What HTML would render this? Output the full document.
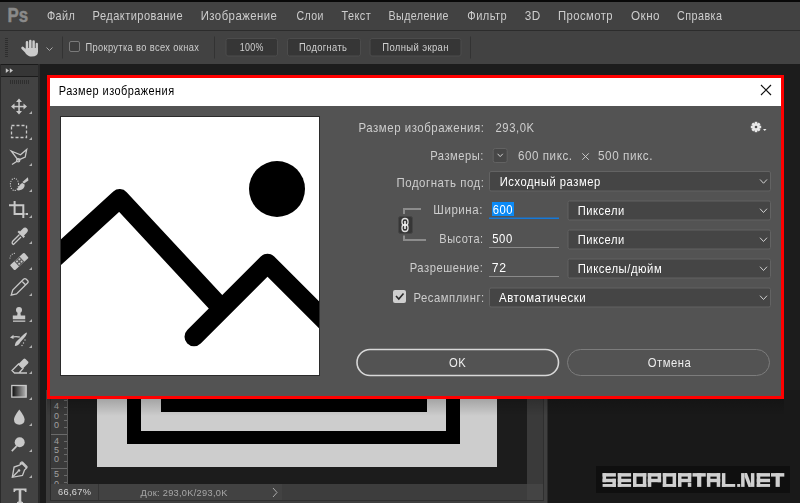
<!DOCTYPE html>
<html><head><meta charset="utf-8">
<style>
*{margin:0;padding:0;box-sizing:border-box}
html,body{width:800px;height:503px;overflow:hidden;background:#1b1b1b;font-family:"Liberation Sans",sans-serif;position:relative}
svg{position:absolute;left:0;top:0}
</style></head><body>
<svg width="800" height="503">
<!-- bars -->
<rect x="0" y="0" width="800" height="2" fill="#080808"/>
<rect x="0" y="2" width="800" height="28" fill="#424242"/>
<rect x="0" y="30" width="800" height="1" fill="#2c2c2c"/>
<rect x="0" y="31" width="800" height="33" fill="#424242"/>
<text x="7.6" y="21.7" font-family="Liberation Sans" font-weight="700" font-size="19.6" fill="#8a8a8a" stroke="#8a8a8a" stroke-width="0.5" textLength="20.6" lengthAdjust="spacingAndGlyphs">Ps</text>
<g fill="#2e2e2e"><rect x="5" y="38" width="3" height="1"/><rect x="5" y="40" width="3" height="1"/><rect x="5" y="42" width="3" height="1"/><rect x="5" y="44" width="3" height="1"/><rect x="5" y="46" width="3" height="1"/><rect x="5" y="48" width="3" height="1"/><rect x="5" y="50" width="3" height="1"/><rect x="5" y="52" width="3" height="1"/><rect x="5" y="54" width="3" height="1"/><rect x="5" y="56" width="3" height="1"/></g>
<g stroke="#cbcbcb" stroke-linecap="round" fill="none"><path d="M27 42.3 V50 M30.3 41 V50 M33.6 41.5 V50" stroke-width="2.5"/><path d="M36.8 44 V50" stroke-width="2.3"/><path d="M22.6 48 L26.8 52.3" stroke-width="2.7"/></g>
<path d="M25.6 48 H38 V51.5 Q38 56.6 31.8 56.6 Q28 56.6 25.6 53.5 Z" fill="#cbcbcb"/>
<path d="M46.5 47.5 L49.5 50.5 L52.5 47.5" stroke="#a8a8a8" stroke-width="1" fill="none"/>
<rect x="62" y="36.5" width="1" height="22" fill="#333"/>
<rect x="69.5" y="41.5" width="10" height="10" rx="1.5" fill="#3d3d3d" stroke="#7a7a7a" stroke-width="1"/>
<rect x="214" y="36.5" width="1" height="22" fill="#333"/>
<rect x="470" y="36.5" width="1" height="22" fill="#333"/>
<rect x="226" y="38.5" width="51.5" height="17.5" rx="2" fill="#363636" stroke="#4c4c4c" stroke-width="1"/>
<rect x="287.5" y="38.5" width="73" height="17.5" rx="2" fill="#363636" stroke="#4c4c4c" stroke-width="1"/>
<rect x="370" y="38.5" width="91" height="17.5" rx="2" fill="#363636" stroke="#4c4c4c" stroke-width="1"/>

<!-- tool panel -->
<rect x="0" y="64" width="800" height="1" fill="#1b1b1b"/>
<rect x="0" y="65" width="38" height="11" fill="#363636"/>
<rect x="0" y="77" width="38" height="426" fill="#424242"/>
<rect x="38" y="64" width="2" height="439" fill="#2a2a2a"/>
<path d="M5.8 68.2 L9 70.6 L5.8 73 Z M9.8 68.2 L13 70.6 L9.8 73 Z" fill="#c8c8c8"/><rect x="0" y="64" width="1" height="439" fill="#2a2a2a"/>
<g fill="#2e2e2e"><rect x="10" y="80" width="1" height="4"/><rect x="12" y="80" width="1" height="4"/><rect x="14" y="80" width="1" height="4"/><rect x="16" y="80" width="1" height="4"/><rect x="18" y="80" width="1" height="4"/><rect x="20" y="80" width="1" height="4"/><rect x="22" y="80" width="1" height="4"/><rect x="24" y="80" width="1" height="4"/><rect x="26" y="80" width="1" height="4"/><rect x="28" y="80" width="1" height="4"/></g>

<g fill="#c8c8c8" stroke="none">
 <!-- move -->
 <rect x="18.3" y="101" width="1.5" height="11"/><rect x="13" y="105.8" width="11" height="1.5"/>
 <path d="M19 98.5 L22 102 L16 102 Z M19 114.5 L22 111 L16 111 Z M11 106.5 L14.5 103.5 L14.5 109.5 Z M27 106.5 L23.5 103.5 L23.5 109.5 Z"/>
</g>
<g fill="none" stroke="#c8c8c8" stroke-width="1.3">
 <rect x="11.5" y="125.5" width="15" height="12" stroke-dasharray="3 2"/>
 <path d="M11.2 151 L20.5 154.8 L26.7 149.4 L25.2 157.1 L18.2 160.2 Z"/>
 <circle cx="18.2" cy="160.2" r="1.6"/>
 <path d="M17 161.2 L12 164.5"/>
</g>
<g fill="#c8c8c8">
 <path d="M27.9 177.2 L28.4 180.6 L24.1 183.6 L22.4 182 Z"/>
 <path d="M24.6 184.6 Q25 187.6 22 189.6 Q19.5 190.9 16.7 190.1 Q18 187.5 19.5 185.5 Q21 183.4 22.4 183 Z"/>
</g>
<g fill="none" stroke="#c8c8c8">
 <ellipse cx="14.5" cy="184.4" rx="4.1" ry="6.1" stroke-width="1.3" stroke-dasharray="0 2.35" stroke-linecap="round"/>
</g>
<g fill="none" stroke="#c8c8c8" stroke-width="2">
 <path d="M14.6 201 V214 H24.5"/>
 <path d="M9 205.3 H23.3 V218"/>
 <path d="M25.5 214 H28"/>
</g>
<g fill="#c8c8c8">
 <path d="M20 231.5 L22.5 229 Q25 226.5 27 228.5 Q29 230.5 26.5 233 L24 235.5 L25 236.5 L23.5 238 L17.5 232 L19 230.5 Z"/>
</g>
<path d="M19.5 234.5 L12.5 241.5 Q11.5 243.5 13.5 244.5 L21 237" fill="none" stroke="#c8c8c8" stroke-width="1.3"/>
<g transform="translate(19.3,261.5) rotate(-42)" fill="#c8c8c8">
 <rect x="-9.5" y="-3.6" width="19" height="7.2" rx="1.2"/>
 <rect x="-3.6" y="-3.6" width="7.2" height="7.2" fill="#5a5a5a"/>
 <circle cx="-1.6" cy="-1.6" r="1" /><circle cx="1.6" cy="-1.6" r="1"/><circle cx="-1.6" cy="1.6" r="1"/><circle cx="1.6" cy="1.6" r="1"/>
</g>
<path d="M10 258.5 A5 5 0 0 1 16 253.5" fill="none" stroke="#c8c8c8" stroke-width="1.1" stroke-dasharray="1 1.2"/>
<g fill="none" stroke="#c8c8c8" stroke-width="1.3">
 <path d="M11.2 295.2 L12.7 290 L23.5 279.2 Q25 278 26.3 279.3 L27.5 280.5 Q28.8 281.8 27.5 283 L16.5 294 Z M21.7 281 L25.7 285"/>
</g>
<g fill="#c8c8c8">
 <circle cx="19" cy="310" r="3"/>
 <path d="M17.8 311 H20.2 L20.8 315.5 H25.2 V319.3 H12.8 V315.5 H17.2 Z"/>
 <rect x="13" y="320.5" width="12.3" height="1.3"/>
 <!-- history brush -->
 <path d="M26.8 332.5 Q27.3 334 24.5 337.5 L20.5 342 Q18.5 346 14.8 346 Q15 342 18 340 L22 336 Q25.5 332.8 26.8 332.5 Z"/>
 <path d="M10 337.5 L13.5 334.7 L13.5 336.2 Q17 335.6 20 336.5 L19.5 337.7 Q16.5 337 13.5 337.5 L13.5 339 Z"/>
 <circle cx="25" cy="340" r="0.7"/><circle cx="23.5" cy="343" r="0.7"/><circle cx="22" cy="345.5" r="0.7"/>
 <!-- eraser -->
 <path d="M18.5 364 L23.5 359 Q24.5 358 25.5 359 L28 361.5 Q29 362.5 28 363.5 L23 368.5 Z"/>
</g>
<path d="M18.5 364 L12 370.5 L14.5 373 L19 373 L23 368.5 Z M14.5 373 H27" fill="none" stroke="#c8c8c8" stroke-width="1.3"/>
<defs><linearGradient id="gr" x1="0" y1="0" x2="1" y2="0"><stop offset="0" stop-color="#0a0a0a"/><stop offset="1" stop-color="#b8b8b8"/></linearGradient></defs>
<rect x="11.8" y="385.5" width="14.4" height="11.6" fill="url(#gr)" stroke="#c8c8c8" stroke-width="1.3"/>
<g fill="#c8c8c8">
 <path d="M19.3 409.5 Q24.6 416.5 24.6 419.6 Q24.6 424.7 19.3 424.7 Q14 424.7 14 419.6 Q14 416.5 19.3 409.5 Z"/>
 <circle cx="19.7" cy="442.3" r="5"/>
 <path d="M11.2 450.5 L16 445.5 L17.2 446.7 L12.4 451.7 Z"/>
 <path d="M13.5 488.5 H26.5 V492 H25.2 Q25 490.2 23.2 490.2 H21.3 V501 Q21.3 502 23 502 V503 H17 V502 Q18.7 502 18.7 501 V490.2 H16.8 Q15 490.2 14.8 492 H13.5 Z"/>
</g>
<g fill="none" stroke="#c8c8c8" stroke-width="1.3">
 <path d="M22 463.5 L26.5 468 L24.5 470 L22.5 475.5 L12.3 477.3 L14.1 467.1 L19.5 465.1 Z M19.8 463.7 L21.3 462.2 Q22 461.6 22.6 462.2 L26.8 466.4 Q27.4 467 26.8 467.7 L25.3 469.2"/>
 <path d="M12.5 477 L18.2 471.3"/>
</g>
<circle cx="19" cy="470.5" r="1.3" fill="#c8c8c8"/>

<path d="M29 114 L32 114 L32 111 Z" fill="#b0b0b0"/><path d="M29 140 L32 140 L32 137 Z" fill="#b0b0b0"/><path d="M29 166 L32 166 L32 163 Z" fill="#b0b0b0"/><path d="M29 192 L32 192 L32 189 Z" fill="#b0b0b0"/><path d="M29 218 L32 218 L32 215 Z" fill="#b0b0b0"/><path d="M29 244 L32 244 L32 241 Z" fill="#b0b0b0"/><path d="M29 270 L32 270 L32 267 Z" fill="#b0b0b0"/><path d="M29 296 L32 296 L32 293 Z" fill="#b0b0b0"/><path d="M29 322 L32 322 L32 319 Z" fill="#b0b0b0"/><path d="M29 348 L32 348 L32 345 Z" fill="#b0b0b0"/><path d="M29 374 L32 374 L32 371 Z" fill="#b0b0b0"/><path d="M29 400 L32 400 L32 397 Z" fill="#b0b0b0"/><path d="M29 426 L32 426 L32 423 Z" fill="#b0b0b0"/><path d="M29 452 L32 452 L32 449 Z" fill="#b0b0b0"/><path d="M29 478 L32 478 L32 475 Z" fill="#b0b0b0"/>

<!-- document window -->
<rect x="40" y="64" width="760" height="439" fill="#1c1c1c"/>
<rect x="547" y="390" width="253" height="113" fill="#191919"/>
<rect x="97" y="390" width="400" height="77" fill="#cdcdcd"/>
<rect x="127" y="390" width="333" height="54" fill="#000"/>
<rect x="141" y="390" width="305" height="41" fill="#cdcdcd"/>
<rect x="161" y="390" width="266" height="22" fill="#000"/>
<rect x="46" y="390" width="4" height="113" fill="#3c3c3c"/>
<rect x="50" y="390" width="1" height="113" fill="#2c2c2c"/>
<rect x="51" y="390" width="17" height="94" fill="#3a3a3a"/>
<g fill="#a0a0a0" font-family="Liberation Sans" font-size="9" text-anchor="middle"><text x="56.6" y="409.3">4</text><text x="56.6" y="418.6">0</text><text x="56.6" y="427.8">0</text><text x="56.6" y="443.8">4</text><text x="56.6" y="453.0">5</text><text x="56.6" y="462.3">0</text><text x="56.6" y="477.3">5</text><text x="56.6" y="486.6">0</text></g>
<rect x="51" y="434" width="17" height="1" fill="#6a6a6a"/>
<rect x="51" y="468" width="17" height="1" fill="#6a6a6a"/>
<g fill="#6a6a6a"><rect x="64" y="400" width="4" height="1"/><rect x="64" y="407" width="4" height="1"/><rect x="64" y="414" width="4" height="1"/><rect x="64" y="420" width="4" height="1"/><rect x="64" y="427" width="4" height="1"/><rect x="64" y="441" width="4" height="1"/><rect x="64" y="448" width="4" height="1"/><rect x="64" y="454" width="4" height="1"/><rect x="64" y="461" width="4" height="1"/><rect x="64" y="475" width="4" height="1"/><rect x="64" y="482" width="4" height="1"/></g>
<rect x="67" y="390" width="1" height="94" fill="#5a5a5a"/>
<rect x="527" y="390" width="16" height="94" fill="#3a3a3a"/>
<rect x="543" y="390" width="1" height="113" fill="#2f2f2f"/>
<rect x="544" y="390" width="3.5" height="113" fill="#404040"/>
<rect x="51" y="484" width="231" height="16" fill="#424242"/>
<rect x="282" y="484" width="245" height="16" fill="#3d3d3d"/>
<rect x="527" y="484" width="16" height="16" fill="#444444"/>
<rect x="50" y="500" width="494" height="1" fill="#2f2f2f"/>
<rect x="46" y="501" width="498" height="2" fill="#3e3e3e"/>
<rect x="98" y="484" width="1" height="16" fill="#353535"/>
<path d="M273 488 L277 492.5 L273 497" stroke="#aaa" stroke-width="1" fill="none"/>

<!-- watermark -->
<rect x="596" y="466" width="194" height="27" fill="#0f0f0f"/>
<g fill="#cfcfcf"><rect x="602.60" y="473.10" width="13.30" height="3.50"/><rect x="602.60" y="473.10" width="3.50" height="9.10"/><rect x="602.60" y="478.75" width="13.30" height="3.45"/><rect x="612.40" y="478.75" width="3.50" height="8.15"/><rect x="602.60" y="484.00" width="13.30" height="2.90"/><rect x="617.80" y="473.10" width="3.50" height="13.80"/><rect x="617.80" y="473.10" width="13.30" height="3.50"/><rect x="617.80" y="478.75" width="13.30" height="3.45"/><rect x="617.80" y="484.00" width="13.30" height="2.90"/><rect x="633.00" y="473.10" width="3.50" height="13.80"/><rect x="642.80" y="473.10" width="3.50" height="13.80"/><rect x="633.00" y="473.10" width="13.30" height="3.50"/><rect x="633.00" y="484.00" width="13.30" height="2.90"/><rect x="647.80" y="473.10" width="3.50" height="13.80"/><rect x="647.80" y="473.10" width="13.30" height="3.50"/><rect x="647.80" y="478.75" width="13.30" height="3.45"/><rect x="657.60" y="473.10" width="3.50" height="9.10"/><rect x="662.80" y="473.10" width="3.50" height="13.80"/><rect x="672.60" y="473.10" width="3.50" height="13.80"/><rect x="662.80" y="473.10" width="13.30" height="3.50"/><rect x="662.80" y="484.00" width="13.30" height="2.90"/><rect x="678.00" y="473.10" width="3.50" height="13.80"/><rect x="678.00" y="473.10" width="13.30" height="3.50"/><rect x="678.00" y="478.75" width="12.30" height="3.45"/><rect x="687.80" y="473.10" width="3.50" height="9.10"/><rect x="687.80" y="482.70" width="3.50" height="4.20"/><rect x="692.50" y="473.10" width="13.30" height="3.50"/><rect x="697.10" y="473.10" width="4.20" height="13.80"/><rect x="706.90" y="473.10" width="3.50" height="13.80"/><rect x="716.70" y="473.10" width="3.50" height="13.80"/><rect x="706.90" y="473.10" width="13.30" height="3.50"/><rect x="706.90" y="478.75" width="13.30" height="3.45"/><rect x="721.90" y="473.10" width="3.50" height="13.80"/><rect x="721.90" y="484.00" width="13.30" height="2.90"/><rect x="737.20" y="484.00" width="3.00" height="2.90"/><rect x="741.10" y="473.10" width="3.50" height="13.80"/><rect x="750.90" y="473.10" width="3.50" height="13.80"/><path d="M744.6 473.1 L747.0 473.1 L750.9 483.40000000000003 L750.9 486.90000000000003 L748.5 486.90000000000003 L744.6 476.6 Z"/><rect x="756.75" y="473.10" width="3.50" height="13.80"/><rect x="756.75" y="473.10" width="13.30" height="3.50"/><rect x="756.75" y="478.75" width="13.30" height="3.45"/><rect x="756.75" y="484.00" width="13.30" height="2.90"/><rect x="771.00" y="473.10" width="13.30" height="3.50"/><rect x="775.60" y="473.10" width="4.20" height="13.80"/></g>

<!-- dialog -->
<defs><linearGradient id="sh" x1="0" y1="0" x2="0" y2="1"><stop offset="0" stop-color="#000" stop-opacity="0.2"/><stop offset="1" stop-color="#000" stop-opacity="0"/></linearGradient></defs>
<rect x="47" y="399" width="737" height="17" fill="url(#sh)"/>
<rect x="48.5" y="76.5" width="734" height="321" fill="#535353" stroke="#ff0000" stroke-width="3"/>
<rect x="50" y="78" width="731" height="28" fill="#ffffff"/>
<path d="M761 85 L771 95 M771 85 L761 95" stroke="#111" stroke-width="1.2"/>
<rect x="60" y="116" width="260" height="260" fill="#2b2b2b"/>
<svg x="61" y="117" width="258" height="258" viewBox="61 117 258 258">
 <rect x="61" y="117" width="258" height="258" fill="#fff"/>
 <circle cx="277" cy="189" r="28" fill="#000"/>
 <polyline points="40,271.4 119.7,198.6 222,308.7" fill="none" stroke="#000" stroke-width="19" stroke-linejoin="round"/>
 <polyline points="194,336.7 267.5,263.2 340,335.7" fill="none" stroke="#000" stroke-width="19" stroke-linejoin="round" stroke-linecap="round"/>
</svg>
<!-- gear -->
<g transform="translate(756,127)" fill="#e8e8e8">
 <rect x="-1.3" y="-5.2" width="2.6" height="10.4" transform="rotate(0)"/><rect x="-1.3" y="-5.2" width="2.6" height="10.4" transform="rotate(45)"/><rect x="-1.3" y="-5.2" width="2.6" height="10.4" transform="rotate(90)"/><rect x="-1.3" y="-5.2" width="2.6" height="10.4" transform="rotate(135)"/>
 <circle r="3.8"/>
 <circle r="1.3" fill="#535353"/>
</g>
<path d="M763 129 L766.5 129 L764.75 131 Z" fill="#e8e8e8"/>
<!-- small dims button -->
<rect x="493.2" y="148.5" width="14" height="14" rx="2" fill="#474747" stroke="#626262"/>
<path d="M497.6 153.8 L500.20000000000005 156.60000000000002 L502.8 153.8" stroke="#cfcfcf" stroke-width="1" fill="none"/>
<rect x="489.5" y="171.5" width="281" height="19.5" rx="1.5" fill="#454545" stroke="#636363" stroke-width="1"/><path d="M760 179.45 L763.5 183.25 L767 179.45" stroke="#d0d0d0" stroke-width="1" fill="none"/>
<rect x="568.0" y="201.0" width="202.5" height="19.0" rx="1.5" fill="#454545" stroke="#636363" stroke-width="1"/><path d="M760 208.7 L763.5 212.5 L767 208.7" stroke="#d0d0d0" stroke-width="1" fill="none"/>
<rect x="568.0" y="230.0" width="202.5" height="19.0" rx="1.5" fill="#454545" stroke="#636363" stroke-width="1"/><path d="M760 237.7 L763.5 241.5 L767 237.7" stroke="#d0d0d0" stroke-width="1" fill="none"/>
<rect x="568.0" y="259.0" width="202.5" height="19.0" rx="1.5" fill="#454545" stroke="#636363" stroke-width="1"/><path d="M760 266.7 L763.5 270.5 L767 266.7" stroke="#d0d0d0" stroke-width="1" fill="none"/>
<rect x="489.5" y="288.0" width="281" height="19.0" rx="1.5" fill="#454545" stroke="#636363" stroke-width="1"/><path d="M760 295.7 L763.5 299.5 L767 295.7" stroke="#d0d0d0" stroke-width="1" fill="none"/>
<!-- inputs -->
<rect x="492" y="202" width="22" height="14" fill="#0b8af6"/>
<rect x="489" y="217.5" width="70" height="1.5" fill="#1679d8"/>
<rect x="489" y="247" width="70" height="1" fill="#8a8a8a"/>
<rect x="489" y="276" width="70" height="1" fill="#8a8a8a"/>
<!-- link bracket -->
<path d="M404 214 V209 H421" stroke="#8c8c8c" stroke-width="2" fill="none"/>
<path d="M404 235.5 V240 H426" stroke="#8c8c8c" stroke-width="2" fill="none"/>
<rect x="398.5" y="216.5" width="14" height="17" rx="2" fill="#363636" stroke="#454545"/>
<rect x="402" y="218.5" width="6" height="7" rx="3" fill="none" stroke="#e0e0e0" stroke-width="1.3"/>
<rect x="402" y="224.5" width="6" height="7" rx="3" fill="none" stroke="#e0e0e0" stroke-width="1.3"/>
<rect x="404.2" y="221" width="1.6" height="8" fill="#f0f0f0"/>
<!-- checkbox -->
<rect x="393" y="290" width="13" height="13" rx="2" fill="#cfcfcf"/>
<path d="M396 296 L398.8 299 L403.5 293.5" stroke="#2a2a2a" stroke-width="1.6" fill="none"/>
<!-- buttons -->
<rect x="357" y="349.5" width="201.5" height="26" rx="13" fill="none" stroke="#d8d8d8" stroke-width="1.6"/>
<rect x="567.5" y="349.5" width="202" height="26" rx="13" fill="none" stroke="#7c7c7c" stroke-width="1"/>
</svg>
<svg style="position:absolute;left:0;top:0;will-change:transform" width="800" height="503" font-family="Liberation Sans">
<text transform="translate(46.90,19.60) scale(0.8819,1)" font-size="12.3" fill="#cdcdcd" letter-spacing="0.5">Файл</text>
<text transform="translate(92.60,19.60) scale(0.8992,1)" font-size="12.3" fill="#cdcdcd" letter-spacing="0.5">Редактирование</text>
<text transform="translate(200.70,19.60) scale(0.9248,1)" font-size="12.3" fill="#cdcdcd" letter-spacing="0.5">Изображение</text>
<text transform="translate(296.50,19.60) scale(0.8599,1)" font-size="12.3" fill="#cdcdcd" letter-spacing="0.5">Слои</text>
<text transform="translate(341.50,19.60) scale(0.8892,1)" font-size="12.3" fill="#cdcdcd" letter-spacing="0.5">Текст</text>
<text transform="translate(388.50,19.60) scale(0.8685,1)" font-size="12.3" fill="#cdcdcd" letter-spacing="0.5">Выделение</text>
<text transform="translate(467.30,19.60) scale(0.8995,1)" font-size="12.3" fill="#cdcdcd" letter-spacing="0.5">Фильтр</text>
<text transform="translate(524.70,19.60) scale(0.9568,1)" font-size="12.3" fill="#cdcdcd" letter-spacing="0.5">3D</text>
<text transform="translate(557.90,19.60) scale(0.9170,1)" font-size="12.3" fill="#cdcdcd" letter-spacing="0.5">Просмотр</text>
<text transform="translate(631.00,19.60) scale(0.9502,1)" font-size="12.3" fill="#cdcdcd" letter-spacing="0.5">Окно</text>
<text transform="translate(677.00,19.60) scale(0.8780,1)" font-size="12.3" fill="#cdcdcd" letter-spacing="0.5">Справка</text>
<text transform="translate(85.40,51.40) scale(0.9202,1)" font-size="10.1" fill="#cccccc" letter-spacing="0.4">Прокрутка во всех окнах</text>
<text transform="translate(239.70,51.30) scale(0.8799,1)" font-size="10.1" fill="#d0d0d0" letter-spacing="0.4">100%</text>
<text transform="translate(299.00,51.30) scale(0.9249,1)" font-size="10.1" fill="#d0d0d0" letter-spacing="0.4">Подогнать</text>
<text transform="translate(382.20,51.30) scale(0.9391,1)" font-size="10.1" fill="#d0d0d0" letter-spacing="0.4">Полный экран</text>
<text transform="translate(58.10,495.20) scale(0.9535,1)" font-size="9.7" fill="#d8d8d8" letter-spacing="0.3">66,67%</text>
<text transform="translate(140.60,496.00) scale(0.9549,1)" font-size="9.7" fill="#a8a8a8" letter-spacing="0.3">Док: 293,0K/293,0K</text>
</svg>
<svg style="position:absolute;left:0;top:0" width="800" height="503" font-family="Liberation Sans">
<text transform="translate(58.80,95.00) scale(0.8647,1)" font-size="12.7" fill="#000000" letter-spacing="0.5">Размер изображения</text>
<text transform="translate(358.50,131.50) scale(0.9009,1)" font-size="12.7" fill="#cdcdcd" letter-spacing="0.6">Размер изображения:</text>
<text transform="translate(495.50,131.80) scale(0.8902,1)" font-size="12.7" fill="#cdcdcd" letter-spacing="0.6">293,0K</text>
<text transform="translate(430.25,160.00) scale(0.8802,1)" font-size="12.7" fill="#cdcdcd" letter-spacing="0.6">Размеры:</text>
<text transform="translate(518.00,160.00) scale(0.9145,1)" font-size="12.7" fill="#cdcdcd" letter-spacing="0.6">600 пикс.</text>
<path d="M582.3 153.3 L588.8 159.8 M588.8 153.3 L582.3 159.8" stroke="#c8c8c8" stroke-width="1" fill="none"/>
<text transform="translate(598.00,160.00) scale(0.9229,1)" font-size="12.7" fill="#cdcdcd" letter-spacing="0.6">500 пикс.</text>
<text transform="translate(396.50,186.90) scale(0.9002,1)" font-size="12.7" fill="#cdcdcd" letter-spacing="0.6">Подогнать под:</text>
<text transform="translate(433.30,214.20) scale(0.9094,1)" font-size="12.7" fill="#cdcdcd" letter-spacing="0.6">Ширина:</text>
<text transform="translate(439.30,243.00) scale(0.8660,1)" font-size="12.7" fill="#cdcdcd" letter-spacing="0.6">Высота:</text>
<text transform="translate(409.75,271.50) scale(0.8817,1)" font-size="12.7" fill="#cdcdcd" letter-spacing="0.6">Разрешение:</text>
<text transform="translate(413.50,301.50) scale(0.8883,1)" font-size="12.7" fill="#cdcdcd" letter-spacing="0.6">Ресамплинг:</text>
<text transform="translate(499.75,185.70) scale(0.8839,1)" font-size="12.7" fill="#ffffff" letter-spacing="0.6">Исходный размер</text>
<text transform="translate(492.70,214.20) scale(0.8839,1)" font-size="12.7" fill="#ffffff" letter-spacing="0.6">600</text>
<text transform="translate(492.25,243.00) scale(0.8906,1)" font-size="12.7" fill="#ffffff" letter-spacing="0.6">500</text>
<text transform="translate(491.80,271.50) scale(0.9627,1)" font-size="12.7" fill="#ffffff" letter-spacing="0.6">72</text>
<text transform="translate(577.65,214.90) scale(0.8783,1)" font-size="12.7" fill="#ffffff" letter-spacing="0.6">Пиксели</text>
<text transform="translate(577.65,243.70) scale(0.8783,1)" font-size="12.7" fill="#ffffff" letter-spacing="0.6">Пиксели</text>
<text transform="translate(577.65,272.60) scale(0.8919,1)" font-size="12.7" fill="#ffffff" letter-spacing="0.6">Пикселы/дюйм</text>
<text transform="translate(499.00,301.60) scale(0.9031,1)" font-size="12.7" fill="#ffffff" letter-spacing="0.6">Автоматически</text>
<text transform="translate(449.00,367.20) scale(0.8865,1)" font-size="12.7" fill="#eeeeee" letter-spacing="0.6">OK</text>
<text transform="translate(647.70,367.20) scale(0.8868,1)" font-size="12.7" fill="#eeeeee" letter-spacing="0.6">Отмена</text>
</svg>
</body></html>
